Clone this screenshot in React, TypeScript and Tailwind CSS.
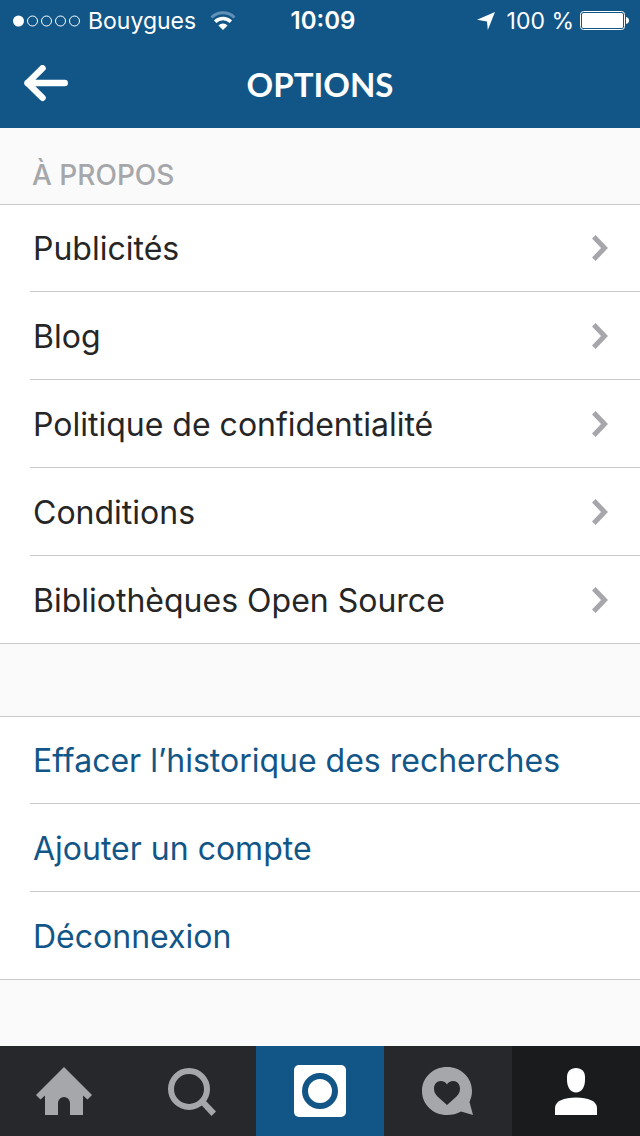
import type { ReactNode } from "react";
import clsx from "clsx";

const aboutLinks = [
  "Publicités",
  "Blog",
  "Politique de confidentialité",
  "Conditions",
  "Bibliothèques Open Source",
];

const accountActions = [
  "Effacer l’historique des recherches",
  "Ajouter un compte",
  "Déconnexion",
];

function StatusBar() {
  return (
    <div className="grid h-10 grid-cols-[1fr_auto_1fr] items-center pt-[2px] pr-[10px] pl-3 text-[23px]">
      <div className="flex items-center">
        <svg width="68" height="14" viewBox="0 0 68 14" fill="none" stroke="#fff" aria-hidden>
          <circle cx="6.5" cy="7" r="5.5" fill="#fff" stroke="none" />
          <circle cx="20.5" cy="7" r="5" />
          <circle cx="34.5" cy="7" r="5" />
          <circle cx="48.5" cy="7" r="5" />
          <circle cx="62.5" cy="7" r="5" />
        </svg>
        <span className="ml-2">Bouygues</span>
        <svg className="ml-[14px]" width="26" height="20" viewBox="0 0 26 20" fill="none" aria-hidden>
          <path d="M1.5 6.5a16.5 16.5 0 0 1 23 0" stroke="#5f90b8" strokeWidth="3" />
          <path d="M5.2 10.8a11 11 0 0 1 15.6 0" stroke="#fff" strokeWidth="3.5" />
          <path d="M13 19l-4.6-4.500a6.500 6.500 0 0 1 9.200 0z" fill="#fff" />
        </svg>
      </div>
      <span className="pl-1 text-2xl font-semibold">10:09</span>
      <div className="flex items-center justify-end">
        <svg width="18" height="18" viewBox="0 0 18 18" fill="#fff" aria-hidden>
          <path d="M18 0L10.800 18L10 9.500L0 7.800z" />
        </svg>
        <span className="ml-3">100 %</span>
        <svg className="ml-[6px]" width="50" height="20" viewBox="0 0 50 20" fill="none" aria-hidden>
          <rect x="0.5" y="0.5" width="44" height="18" rx="3" stroke="#fff" />
          <rect x="2" y="2" width="41" height="15" rx="1.5" fill="#fff" />
          <path d="M46 6c2 .4 3 1.700 3 3.500s-1 3.100-3 3.500z" fill="#fff" />
        </svg>
      </div>
    </div>
  );
}

function Header() {
  return (
    <header className="bg-[#125688] text-white">
      <StatusBar />
      <div className="grid h-22 grid-cols-[1fr_auto_1fr] items-center px-6">
        <button type="button" aria-label="Retour" className="justify-self-start">
          <svg
            width="44"
            height="38"
            viewBox="0 0 44 38"
            fill="none"
            stroke="currentColor"
            strokeWidth="6.5"
            strokeLinecap="round"
            strokeLinejoin="round"
            aria-hidden
          >
            <path d="M18.500 3.300L3.500 18L18.500 32.700M3.500 18H40.700" />
          </svg>
        </button>
        <h1 className="pt-[2px] font-['Lato'] text-[33px] font-bold">OPTIONS</h1>
      </div>
    </header>
  );
}

interface RowProps {
  label: string;
  action?: boolean;
}

function Row({ label, action }: RowProps) {
  return (
    <li className="group h-22 border-[#c7c8ca] bg-white pl-[30px] first:border-t last:border-b last:pl-0">
      <a
        href="#"
        className={clsx(
          "flex h-full items-center justify-between border-b border-[#c7c8ca] pr-8 pl-[3px] text-[32px] group-last:border-b-0 group-last:pl-[33px]",
          action ? "text-[#125688]" : "text-[#262626]",
        )}
      >
        <span className="pt-[2px]">{label}</span>
        {!action && (
          <svg width="16" height="26" viewBox="0 0 16 26" fill="none" stroke="#a5a7aa" strokeWidth="5" aria-hidden>
            <path d="M1.800 1.800L12.500 13L1.800 24.200" />
          </svg>
        )}
      </a>
    </li>
  );
}

interface TabProps {
  label: string;
  className?: string;
  children: ReactNode;
}

function Tab({ label, className, children }: TabProps) {
  return (
    <button
      type="button"
      aria-label={label}
      className={clsx("flex items-center justify-center", className ?? "text-[#a5a7aa]")}
    >
      <svg width="60" height="60" viewBox="0 0 60 60" fill="currentColor" aria-hidden>
        {children}
      </svg>
    </button>
  );
}

function TabBar() {
  return (
    <nav className="sticky bottom-0 grid h-[90px] grid-cols-5 bg-[#27282c]">
      <Tab label="Accueil">
        <path d="M30 6L58 34L53.500 38.500L49 34.500V54H36V42a6 6 0 0 0-12 0V54H11V34.500L6.500 38.500L2 34z" />
      </Tab>
      <Tab label="Rechercher">
        <circle cx="27" cy="28" r="18" fill="none" stroke="currentColor" strokeWidth="6" />
        <path d="M38.500 43L42.500 38.500L54 50.500L49.500 55z" />
      </Tab>
      <Tab label="Photo" className="bg-[#125688] text-white">
        <rect x="4" y="4" width="52" height="52" rx="5" />
        <circle cx="30" cy="30" r="15" fill="none" stroke="#125688" strokeWidth="6" />
      </Tab>
      <Tab label="Activité">
        <path d="M29 6C43 6 54 16.500 54 30C54 34 53 37.500 51.500 41L55 54L43 50.500C39 53 34 54 29 54C15 54 4 43.500 4 30S15 6 29 6z" />
        <path
          d="M29 44L19.500 35.500C17 33 16 30.500 16 27.500C16 23 19 20 22.800 20C25.500 20 28 21.300 29 23.500C30 21.300 32.500 20 35.200 20C39 20 42 23 42 27.500C42 30.500 41 33 38.500 35.500z"
          fill="#27282c"
        />
      </Tab>
      <Tab label="Profil" className="bg-[#1a1b1d] text-white">
        <path d="M30 7C35.500 7 39 10.500 39 16V19C39 26 35.500 31.500 30 31.500S21 26 21 19V16C21 10.500 24.500 7 30 7z" />
        <path d="M9 54V47C9 40 18 36.500 30 36.500S51 40 51 47V54z" />
      </Tab>
    </nav>
  );
}

export default function App() {
  return (
    <div className="flex min-h-screen flex-col bg-[#fafafa] font-['Inter','Liberation_Sans',sans-serif]">
      <Header />

      <main className="flex-1">
        <h2 className="flex h-19 items-end px-8 pb-2 text-[28px] font-medium text-[#a5a7aa]">
          À PROPOS
        </h2>
        <ul>
          {aboutLinks.map((label) => (
            <Row key={label} label={label} />
          ))}
        </ul>
        <ul className="mt-18">
          {accountActions.map((label) => (
            <Row key={label} label={label} action />
          ))}
        </ul>
      </main>

      <TabBar />
    </div>
  );
}
